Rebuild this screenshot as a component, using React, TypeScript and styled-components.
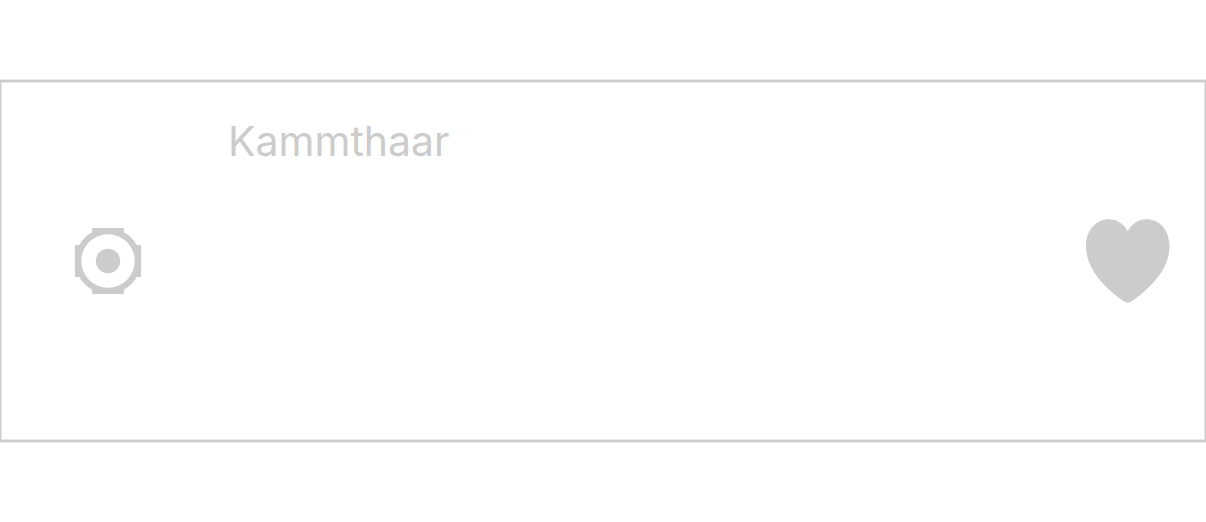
import React from "react";
import styled, { createGlobalStyle } from "styled-components";

const GlobalStyle = createGlobalStyle`
  *, *::before, *::after { box-sizing: border-box; }
  body { margin: 0; background: #fff; color: #ccc; font-family: Inter, "Liberation Sans", sans-serif; }
`;

const Page = styled.main`
  min-height: 100vh;
  display: flex;
  align-items: center;
`;

const Card = styled.article`
  flex: 1;
  display: flex;
  align-items: center;
  min-height: 362px;
  padding: 36px 35px 36px 74px;
  border: solid #ccc;
  border-width: 2px 1px;
  box-shadow: 0 0 0 1px #e8e8e8, inset 0 0 0 1px #e8e8e8;
`;

const IconButton = styled.button`
  display: flex;
  padding: 0;
  border: 0;
  background: none;
  color: inherit;
  cursor: pointer;
`;

const Body = styled.div`
  flex: 1;
  align-self: stretch;
  padding-left: 87px;
`;

const Name = styled.h1`
  margin: 0;
  font-size: 41px;
  line-height: 46px;
  font-weight: 400;
`;

export default function App() {
  return (
    <>
      <GlobalStyle />
      <Page>
        <Card>
          <IconButton type="button" aria-label="Options">
            <svg width="66" height="66" viewBox="0 0 66 66" fill="currentColor" aria-hidden="true">
              <path
                fillRule="evenodd"
                d="M17 0H49V4.3A33 33 0 0 1 61.7 17H66V49H61.7A33 33 0 0 1 49 61.7V66H17V61.7A33 33 0 0 1 4.3 49H0V17H4.3A33 33 0 0 1 17 4.3ZM33 6.3A26.7 26.7 0 1 0 33 59.7A26.7 26.7 0 1 0 33 6.3Z"
              />
              <circle cx="33" cy="33" r="12.2" />
            </svg>
          </IconButton>
          <Body>
            <Name>Kammthaar</Name>
          </Body>
          <IconButton type="button" aria-label="Favourite">
            <svg width="84" height="84" viewBox="0 0 84 84" fill="currentColor" aria-hidden="true">
              <path d="M41.8 12.2C38 5 31 0.3 23 0.3C10 0.3 0 11 0 27.5C0 51 21 71 38.7 82.7Q41.8 85 44.9 82.7C62.5 71 83.5 51 83.5 27.5C83.5 11 73.5 0.3 60.5 0.3C52.5 0.3 45.5 5 41.8 12.2Z" />
            </svg>
          </IconButton>
        </Card>
      </Page>
    </>
  );
}
